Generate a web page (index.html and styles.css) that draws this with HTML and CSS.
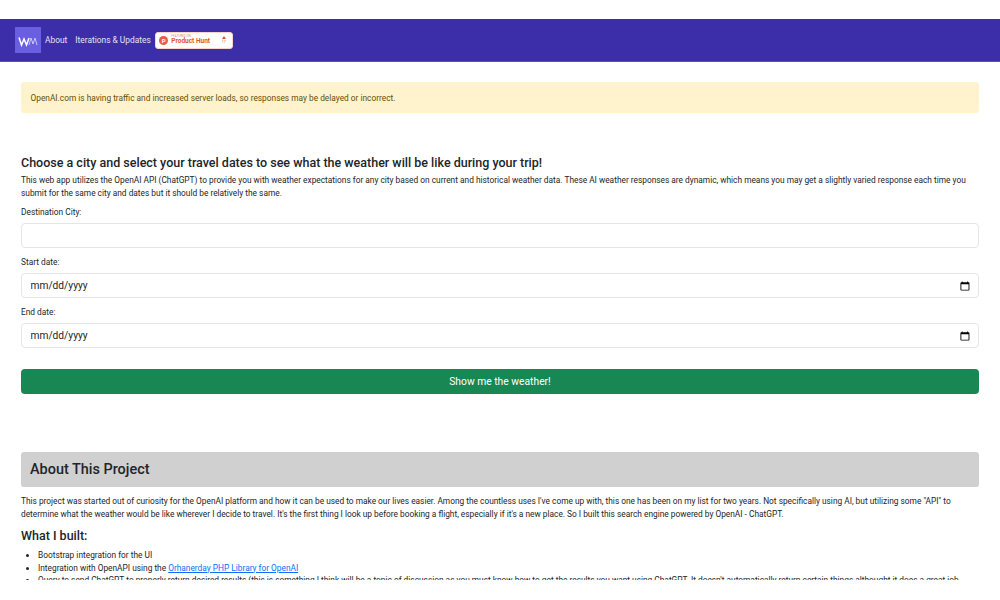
FILE: index.html
```html
<!DOCTYPE html>
<html lang="en">
<head>
<meta charset="utf-8">
<title>Weather Trip</title>
<link rel="stylesheet" href="styles.css">
</head>
<body>
<div class="page">
  <nav class="navbar">
    <a class="logo" href="#"><svg viewBox="0 0 26 26" width="26" height="26"><path d="M4 10.500 L6.500 18 L9 12 L11.500 18 L14 11" fill="none" stroke="#fff" stroke-width="1.500"/><path d="M14 18 L16 11 L18 17 L20 11 L22 18" fill="none" stroke="#c9c6f5" stroke-width="1"/></svg></a>
    <a class="nav-link" href="#">About</a>
    <a class="nav-link" href="#">Iterations &amp; Updates</a>
    <a class="ph-badge" href="#">
      <span class="ph-circle">P</span>
      <span class="ph-text"><span class="ph-small">FEATURED ON</span><span class="ph-name">Product Hunt</span></span>
      <span class="ph-votes"><span class="ph-arrow"></span><span class="ph-count">17</span></span>
    </a>
  </nav>
  <main class="container">
    <div class="alert">OpenAI.com is having traffic and increased server loads, so responses may be delayed or incorrect.</div>
    <h1 class="title">Choose a city and select your travel dates to see what the weather will be like during your trip!</h1>
    <p class="para">This web app utilizes the OpenAI API (ChatGPT) to provide you with weather expectations for any city based on current and historical weather data. These AI weather responses are dynamic, which means you may get a slightly varied response each time you submit for the same city and dates but it should be relatively the same.</p>
    <form class="form">
      <label class="label" for="city">Destination City:</label>
      <input class="field" id="city" type="text">
      <label class="label" for="start">Start date:</label>
      <input class="field" id="start" type="date">
      <label class="label" for="end">End date:</label>
      <input class="field" id="end" type="date">
      <button class="submit" type="button">Show me the weather!</button>
    </form>
    <section class="about">
      <h2 class="about-head">About This Project</h2>
      <p class="para">This project was started out of curiosity for the OpenAI platform and how it can be used to make our lives easier. Among the countless uses I've come up with, this one has been on my list for two years. Not specifically using AI, but utilizing some "API" to determine what the weather would be like wherever I decide to travel. It's the first thing I look up before booking a flight, especially if it's a new place. So I built this search engine powered by OpenAI - ChatGPT.</p>
      <h3 class="built">What I built:</h3>
      <ul class="list">
        <li>Bootstrap integration for the UI</li>
        <li>Integration with OpenAPI using the <a href="#">Orhanerday PHP Library for OpenAI</a></li>
        <li>Query to send ChatGPT to properly return desired results (this is something I think will be a topic of discussion as you must know how to get the results you want using ChatGPT. It doesn't automatically return certain things althought it does a great job</li>
      </ul>
    </section>
  </main>
</div>
</body>
</html>
```
FILE: styles.css
```css
* { box-sizing: border-box; }
html, body { margin: 0; background: #fff; }
body { font-family: Roboto, "Liberation Sans", sans-serif; color: #212529; }
.page { margin-top: 19px; height: 561px; overflow: hidden; }
.navbar { display: flex; align-items: center; height: 43px; padding: 0 15px; background: #3c2ea9; border-bottom: 1px solid #5a4fc0; }
.logo { display: block; width: 26px; height: 26px; background: #6a5fe0; }
.logo svg { display: block; }
.nav-link { color: #e4e2f6; font-size: 8.400px; text-decoration: none; padding: 0 4px; }
.ph-badge { display: flex; align-items: center; width: 78px; height: 17px; padding: 0 6px 0 3.500px; background: #fff; border: 1px solid #f7d5cd; border-radius: 3px; text-decoration: none; color: #da552f; }
.ph-circle { width: 9px; height: 9px; border-radius: 50%; background: #ea5a48; color: #fff; font-size: 6px; font-weight: 700; line-height: 9px; text-align: center; flex: none; }
.ph-text { display: flex; flex-direction: column; margin-left: 3px; flex: 1; }
.ph-small { font-size: 3px; line-height: 3.500px; color: #e08c76; }
.ph-name { font-size: 6.500px; font-weight: 700; line-height: 7px; }
.ph-votes { display: flex; flex-direction: column; align-items: center; gap: 1px; }
.ph-arrow { width: 0; height: 0; border: 2px solid transparent; border-top: 0; border-bottom: 3px solid #da552f; }
.ph-count { font-size: 3.500px; line-height: 4px; }
.container { padding: 20px 21px 0; }
.alert { height: 31px; padding: 0 8.500px; line-height: 31px; font-size: 8.330px; color: #664d03; background: #fff3cd; border: 1px solid #fff3cd; border-radius: 3px; }
.title { margin: 42px 0 0; font-size: 12.500px; line-height: 16px; font-weight: 500; }
.para { margin: 3px 0 0; font-size: 8.330px; line-height: 12.500px; color: #212529; }
.form { display: flex; flex-direction: column; margin-top: 7px; }
.label { font-size: 8.330px; line-height: 12.500px; margin-bottom: 4px; }
.field { display: block; width: 100%; height: 25.500px; margin-bottom: 8px; padding: 1px 8.500px 0; font: 400 10.200px Roboto, sans-serif; color: #212529; background: #fff; border: 1px solid #e3e5e8; border-radius: 4px; appearance: none; }
.field::-webkit-datetime-edit { padding: 0; }
.field::-webkit-datetime-edit-month-field,
.field::-webkit-datetime-edit-day-field,
.field::-webkit-datetime-edit-year-field { padding: 0; }
.field::-webkit-calendar-picker-indicator { margin-right: 0; padding: 0; }
.submit { height: 25px; margin-top: 13px; font: 400 10.300px Roboto, sans-serif; color: #fff; background: #198754; border: 0; border-radius: 4px; }
.about { margin-top: 58px; }
.about-head { height: 35px; margin: 0; padding: 0 9px; line-height: 36px; font-size: 14.450px; font-weight: 500; background: #d0d0d0; border-radius: 3px; }
.about .para { margin-top: 8px; }
.built { margin: 8px 0 0; font-size: 12.500px; line-height: 15px; font-weight: 500; }
.list { margin: 6px 0 0; padding-left: 17px; font-size: 8.330px; line-height: 12.500px; }
.list a { color: #0d6efd; }
```
